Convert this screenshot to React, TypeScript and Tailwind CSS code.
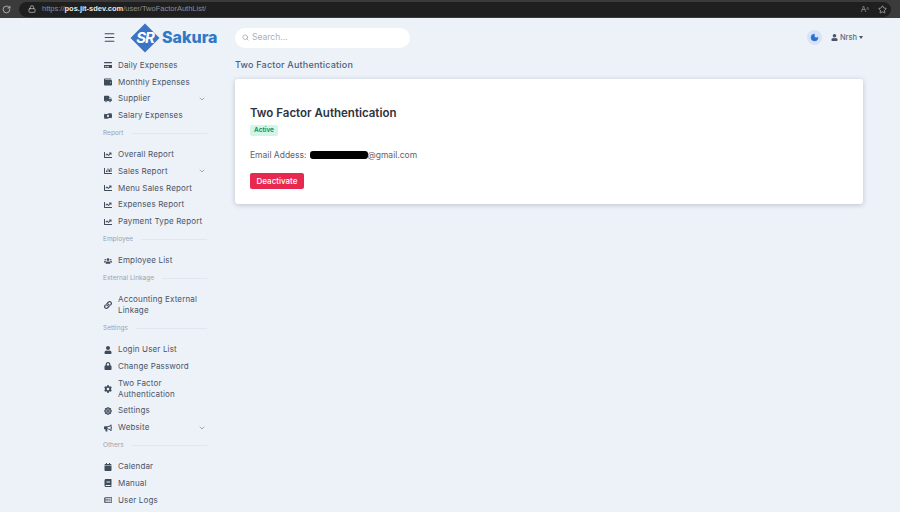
import type { ReactNode } from 'react';
import { ChevronDown, Moon, RotateCw, Search, Star, Lock, Menu } from 'lucide-react';
import {
  FaBook,
  FaBullhorn,
  FaCalendar,
  FaChartBar,
  FaChartLine,
  FaCog,
  FaFileAlt,
  FaLink,
  FaLock,
  FaMoneyBillWave,
  FaRegNewspaper,
  FaTruck,
  FaUser,
  FaUsers,
  FaWallet,
  FaCreditCard,
  FaDharmachakra,
} from 'react-icons/fa';

type Item = { label: ReactNode; icon: ReactNode; chevron?: boolean; tall?: boolean };
type Group = { title?: string; items: Item[] };

const ic = 'text-[8px] text-[#3f4a5a]';

const groups: Group[] = [
  {
    items: [
      { label: 'Daily Expenses', icon: <FaCreditCard className={ic} /> },
      { label: 'Monthly Expenses', icon: <FaWallet className={ic} /> },
      { label: 'Supplier', icon: <FaTruck className={ic} />, chevron: true },
      { label: 'Salary Expenses', icon: <FaMoneyBillWave className={ic} /> },
    ],
  },
  {
    title: 'Report',
    items: [
      { label: 'Overall Report', icon: <FaChartLine className={ic} /> },
      { label: 'Sales Report', icon: <FaChartBar className={ic} />, chevron: true },
      { label: 'Menu Sales Report', icon: <FaChartLine className={ic} /> },
      { label: 'Expenses Report', icon: <FaChartLine className={ic} /> },
      { label: 'Payment Type Report', icon: <FaChartLine className={ic} /> },
    ],
  },
  {
    title: 'Employee',
    items: [{ label: 'Employee List', icon: <FaUsers className={ic} /> }],
  },
  {
    title: 'External Linkage',
    items: [
      {
        label: (
          <>
            Accounting External
            <br />
            Linkage
          </>
        ),
        icon: <FaLink className={ic} />,
        tall: true,
      },
    ],
  },
  {
    title: 'Settings',
    items: [
      { label: 'Login User List', icon: <FaUser className={ic} /> },
      { label: 'Change Password', icon: <FaLock className={ic} /> },
      {
        label: (
          <>
            Two Factor
            <br />
            Authentication
          </>
        ),
        icon: <FaCog className={ic} />,
        tall: true,
      },
      { label: 'Settings', icon: <FaDharmachakra className={ic} /> },
      { label: 'Website', icon: <FaBullhorn className={ic} />, chevron: true },
    ],
  },
  {
    title: 'Others',
    items: [
      { label: 'Calendar', icon: <FaCalendar className={ic} /> },
      { label: 'Manual', icon: <FaBook className={ic} /> },
      { label: 'User Logs', icon: <FaRegNewspaper className={ic} /> },
    ],
  },
];

function NavRow({ item }: { item: Item }) {
  return (
    <div className={`flex items-center ${item.tall ? 'h-[27.75px]' : 'h-[16.75px]'}`}>
      <span className="flex w-[15px] shrink-0 justify-start pl-px">{item.icon}</span>
      <span className="text-[8px] leading-[11px] tracking-[0.15px] text-[#4a5568]">{item.label}</span>
      {item.chevron && <ChevronDown className="ml-auto mr-[1px] h-2 w-2 text-[#7a8594]" />}
    </div>
  );
}

function SectionTitle({ title }: { title: string }) {
  return (
    <div className="flex h-[22.25px] items-start pt-[3.5px]">
      <span className="flex h-[11px] w-full items-center gap-2 text-[6.5px] leading-none text-[#9aa3b0]">
        <span className="shrink-0">{title}</span>
        <span className="h-px flex-1 bg-[#e2e7ef]" />
      </span>
    </div>
  );
}

export default function App() {
  return (
    <div className="flex h-[512px] w-[900px] flex-col overflow-hidden bg-[#edf1f8] font-['Inter',sans-serif]">
      {/* Browser bar */}
      <div className="flex h-[18px] shrink-0 items-center bg-[#3b3b3b] pl-[2px] pr-[9px]">
        <RotateCw className="h-[9px] w-[9px] text-[#c9c9c9]" />
        <div className="ml-[8px] flex h-[15px] flex-1 items-center rounded-full bg-[#1f1f1f] pl-[9px] pr-[4px]">
          <Lock className="h-[8px] w-[8px] text-[#d0d0d0]" />
          <span className="ml-[6px] font-['Liberation_Sans',sans-serif] text-[7.5px] text-[#8f8f8f]">
            https://<span className="font-bold text-[#e8e8e8]">pos.jit-sdev.com</span>/user/TwoFactorAuthList/
          </span>
          <span className="ml-auto text-[8px] text-[#8f8f8f]">A<sup className="text-[5px]">ʌ</sup></span>
          <Star className="ml-[9px] h-[9px] w-[9px] text-[#b5b5b5]" />
        </div>
      </div>

      <div className="flex min-h-0 flex-1">
        {/* Sidebar */}
        <aside className="w-[235px] shrink-0 pl-[103px] pr-[28px]">
          <div className="flex h-[39px] items-center">
            <Menu className="h-[13px] w-[13px] text-[#3f4a5a]" />
            <div className="relative ml-[14px] h-[30px] w-[30px] shrink-0">
              <svg viewBox="0 0 30 30" className="h-full w-full">
                <path d="M15 0.5 29.5 15 15 29.5 0.5 15Z" fill="#3a74c4" />
              </svg>
              <span className="absolute inset-0 flex items-center justify-center text-[15px] font-bold italic leading-none tracking-[-1px] text-white">
                SR
              </span>
            </div>
          </div>
          {groups.map((group, i) => (
            <div key={i}>
              {group.title && <SectionTitle title={group.title} />}
              {group.items.map((item, j) => (
                <NavRow key={j} item={item} />
              ))}
            </div>
          ))}
        </aside>

        {/* Main */}
        <main className="min-w-0 flex-1 pr-[37px]">
          <div className="relative flex h-[39px] items-center">
            <span className="absolute left-[-73px] top-[9px] text-[16px] font-extrabold leading-[20px] text-[#2f79c9]">Sakura</span>
            <div className="flex h-[20px] w-[175px] items-center rounded-full bg-white pl-[7px]">
              <Search className="h-[7px] w-[7px] text-[#8a93a0]" />
              <span className="ml-[3px] text-[8.5px] text-[#aab1bc]">Search...</span>
            </div>
            <div className="ml-auto flex items-center">
              <span className="flex h-[15px] w-[15px] items-center justify-center rounded-full bg-[#d5e3f8]">
                <Moon className="h-[9px] w-[9px] fill-[#2f6fd0] text-[#2f6fd0]" />
              </span>
              <FaUser className="ml-[9px] text-[7px] text-[#4a5568]" />
              <span className="ml-[2px] text-[7.5px] font-medium text-[#5a6b85]">Nrsh</span>
              <span className="ml-[2px] h-0 w-0 border-x-[2.5px] border-t-[3px] border-x-transparent border-t-[#4a5568]" />
            </div>
          </div>

          <h1 className="mt-[1px] text-[9px] font-medium leading-[14px] tracking-[0.2px] text-[#4b5f80]">Two Factor Authentication</h1>

          <section className="mt-[7px] h-[125px] rounded-[3px] bg-white pl-[15px] pt-[27px] shadow-[0_1px_5px_rgba(60,75,100,0.28)]">
            <h2 className="text-[11.5px] font-semibold leading-[14px] text-[#2d3340]">Two Factor Authentication</h2>
            <span className="mt-[5px] flex h-[11px] w-[28px] items-center justify-center rounded-[2px] bg-[#d2f6e6] text-[6.5px] font-semibold text-[#0b8a5c]">
              Active
            </span>
            <div className="mt-[13px] flex h-[12px] items-center text-[8.5px] text-[#5c6470]">
              <span>Email Addess:</span>
              <span className="ml-[3px] h-[8px] w-[58px] rounded-[3px] bg-black" />
              <span>@gmail.com</span>
            </div>
            <button className="mt-[12px] h-[16px] w-[54px] rounded-[2px] bg-[#e8294f] text-[8px] font-medium text-white">Deactivate</button>
          </section>
        </main>
      </div>
    </div>
  );
}
